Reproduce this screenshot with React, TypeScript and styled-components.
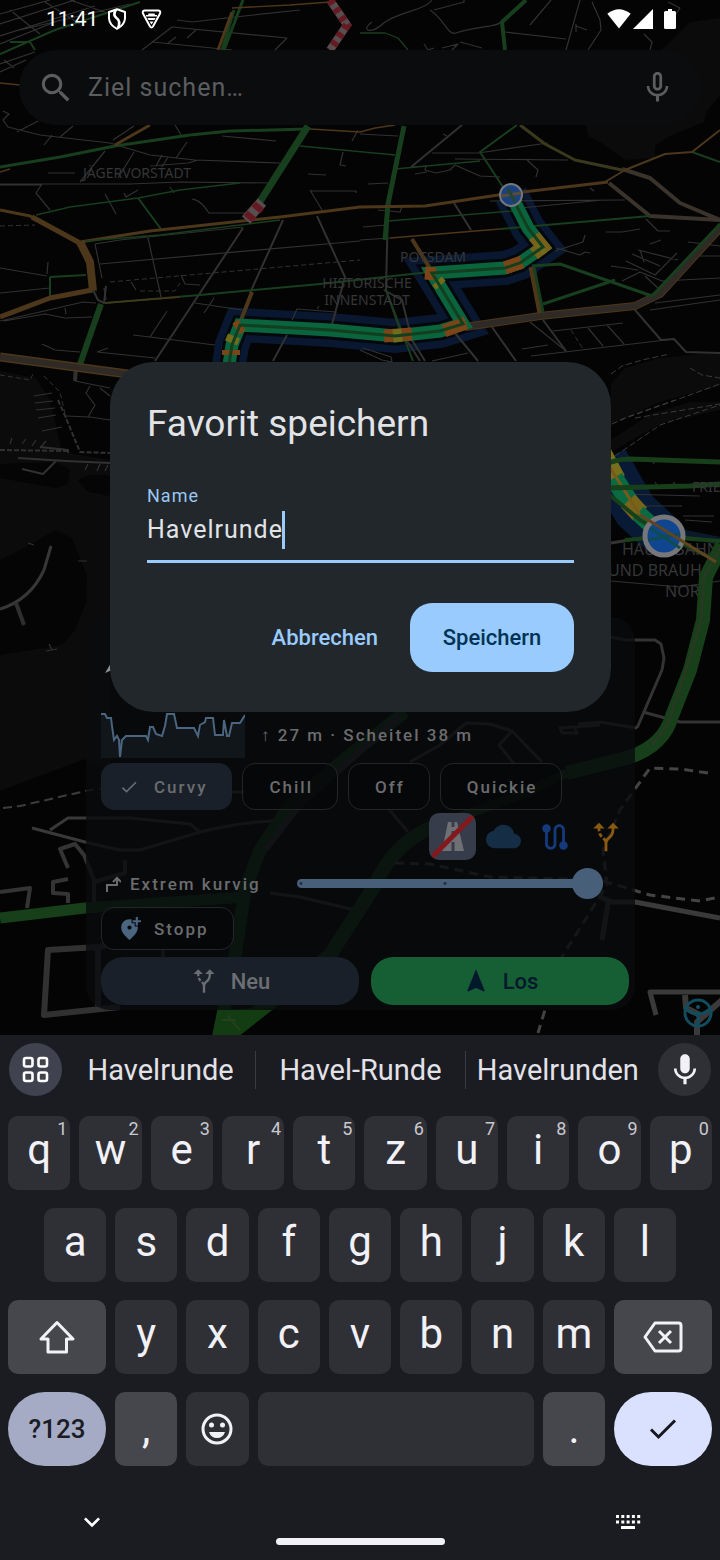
import React from "react";
import styled, { createGlobalStyle, css } from "styled-components";
import {
  MdAddLocationAlt,
  MdAltRoute,
  MdCheck,
  MdCloud,
  MdExpandMore,
  MdMic,
  MdMicNone,
  MdNavigation,
  MdRoute,
  MdSearch,
} from "react-icons/md";

const GlobalStyle = createGlobalStyle`
  *, *::before, *::after { box-sizing: border-box; }
  body {
    margin: 0;
    background: #1b1c21;
    font-family: Roboto, "Liberation Sans", sans-serif;
  }
  button, input { font: inherit; color: inherit; }
  button { border: 0; padding: 0; background: none; cursor: pointer; }
  svg { display: block; flex: none; }
`;

/* ---------- Page frame ---------- */

const Screen = styled.div`
  display: flex;
  flex-direction: column;
  min-height: 100vh;
`;

const Stage = styled.main`
  position: relative;
  flex: 1;
  display: flex;
  flex-direction: column;
  overflow: hidden;
  background: #040404;
`;

const MapCanvas = styled.svg`
  position: absolute;
  inset: 0;
  width: 100%;
  height: 100%;
`;

const MapLabel = styled.text<{ $size?: number }>`
  font-family: "Noto Sans", sans-serif;
  font-size: ${(p) => p.$size ?? 14}px;
  fill: #353637;
`;

const StatusBar = styled.header`
  position: relative;
  display: flex;
  justify-content: space-between;
  align-items: center;
  height: 38px;
  padding: 0 44px 0 46px;
  color: #fff;
  font-size: 21px;
`;

const StatusGroup = styled.div<{ $gap: number }>`
  display: flex;
  align-items: center;
  gap: ${(p) => p.$gap}px;
`;

const SearchBar = styled.div`
  position: relative;
  display: flex;
  align-items: center;
  height: 75px;
  margin: 12px 19px 0;
  padding: 0 25px 0 18px;
  border-radius: 38px;
  background: #0a0c0e;
  color: #5c5d5f;
`;

const SearchInput = styled.input`
  flex: 1;
  min-width: 0;
  margin-left: 13px;
  padding: 0;
  border: 0;
  outline: 0;
  background: none;
  font-size: 25px;
  letter-spacing: 1px;
  &::placeholder { color: #5c5d5f; opacity: 1; }
`;

/* ---------- Route panel ---------- */

const Panel = styled.section`
  position: relative;
  display: flex;
  flex-direction: column;
  margin: auto 85px 25px 86px;
  padding: 0 6px 5px 15px;
  border-radius: 24px;
  background: rgba(9, 11, 14, 0.8);
  color: #6b6c6e;
  font-size: 17px;
  font-weight: 500;
  letter-spacing: 2px;
`;

const PanelHeader = styled.div`
  display: flex;
  align-items: center;
  height: 95px;
  padding: 0 4px;
  color: #8c8d8f;
`;

const ElevationRow = styled.div`
  display: flex;
  align-items: center;
  gap: 16px;
  height: 46px;
  margin-bottom: 5px;
`;

const ChipRow = styled.div`
  display: flex;
  gap: 10px;
  margin-bottom: 3px;
`;

const Chip = styled.button<{ $selected?: boolean; $icon?: boolean; $height?: number }>`
  display: flex;
  align-items: center;
  align-self: flex-start;
  gap: 14px;
  height: ${(p) => p.$height ?? 47}px;
  padding: ${(p) => (p.$icon ? "0 24px 0 16px" : "0 24px 0 26px")};
  border: 1px solid ${(p) => (p.$selected ? "#1a2029" : "#232527")};
  border-radius: 13px;
  background: ${(p) => (p.$selected ? "#1a2029" : "rgba(6, 7, 9, 0.7)")};
  letter-spacing: 2px;
`;

const ChipIcon = styled.span`
  display: flex;
  align-items: center;
  justify-content: center;
  width: 22px;
`;

const ToolRow = styled.div`
  display: flex;
  justify-content: flex-end;
  gap: 4px;
`;

const ToolButton = styled.button<{ $color?: string; $active?: boolean }>`
  display: grid;
  place-items: center;
  width: 47px;
  height: 47px;
  border-radius: 10px;
  color: ${(p) => p.$color};
  background: ${(p) => (p.$active ? "#363c4a" : "transparent")};
`;

const CurvyRow = styled.div`
  display: flex;
  align-items: center;
  justify-content: space-between;
  height: 47px;
  padding: 0 26px 0 4px;
`;

const CurvyLabel = styled.label`
  display: flex;
  align-items: center;
  gap: 9px;
`;

const thumb = css`
  width: 31px;
  height: 31px;
  border: 0;
  border-radius: 50%;
  background: #475f79;
`;

const Slider = styled.input`
  appearance: none;
  width: 306px;
  height: 31px;
  margin: 0;
  background: none;
  &::-webkit-slider-runnable-track {
    height: 9px;
    border-radius: 5px;
    background:
      radial-gradient(circle at 4px 50%, #1f3040 1px, transparent 2px),
      radial-gradient(circle at 148px 50%, #1f3040 1px, transparent 2px),
      #475f79;
  }
  &::-webkit-slider-thumb {
    appearance: none;
    margin-top: -11px;
    ${thumb}
  }
  &::-moz-range-thumb { ${thumb} }
`;

const ActionRow = styled.div`
  display: grid;
  grid-template-columns: 1fr 1fr;
  gap: 12px;
  margin-top: 7px;
`;

const ActionButton = styled.button<{ $primary?: boolean }>`
  display: flex;
  align-items: center;
  justify-content: center;
  gap: 13px;
  height: 48px;
  border-radius: 22px;
  background: ${(p) => (p.$primary ? "#165e34" : "#1a2029")};
  color: ${(p) => (p.$primary ? "#02192c" : "#6b6e73")};
  font-size: 22px;
  letter-spacing: 0;
`;

/* ---------- Dialog ---------- */

const DialogLayer = styled.div`
  position: absolute;
  inset: 0;
  display: flex;
  align-items: center;
  padding: 38px 109px 0 110px;
`;

const Dialog = styled.form`
  flex: 1;
  padding: 37px 37px 40px;
  border-radius: 44px;
  background: #22272b;
  color: #e1e3e7;
`;

const DialogTitle = styled.h1`
  margin: 0 0 35px;
  font-size: 37px;
  line-height: 50px;
  font-weight: 400;
`;

const FieldLabel = styled.label`
  display: block;
  font-size: 18px;
  line-height: 24px;
  letter-spacing: 1px;
  color: #99c7f2;
`;

const Field = styled.div`
  display: flex;
  align-items: center;
  margin-top: 3px;
  padding-bottom: 11px;
  border-bottom: 3px solid #99cbff;
`;

const FieldInput = styled.input`
  field-sizing: content;
  min-width: 20px;
  max-width: 100%;
  height: 38px;
  padding: 0;
  border: 0;
  outline: 0;
  background: none;
  caret-color: transparent;
  font-size: 25px;
  letter-spacing: 1px;
`;

const Caret = styled.span`
  width: 3px;
  height: 38px;
  margin-left: -1px;
  background: #99cbff;
`;

const DialogActions = styled.div`
  display: flex;
  justify-content: flex-end;
  gap: 12px;
  margin-top: 40px;
`;

const DialogButton = styled.button<{ $filled?: boolean }>`
  min-width: ${(p) => (p.$filled ? 164 : 0)}px;
  height: 69px;
  padding: 0 20px;
  border-radius: 22px;
  background: ${(p) => (p.$filled ? "#99cbff" : "transparent")};
  color: ${(p) => (p.$filled ? "#003355" : "#99cbff")};
  font-size: 22px;
  font-weight: 500;
`;

/* ---------- Keyboard ---------- */

const Keyboard = styled.section`
  background: #1b1c21;
  color: #f2f1f8;
`;

const SuggestionBar = styled.div`
  display: flex;
  align-items: center;
  gap: 4px;
  height: 69px;
  padding: 0 9px;
`;

const RoundButton = styled.button<{ $bg: string }>`
  display: grid;
  place-items: center;
  width: 53px;
  height: 53px;
  border-radius: 50%;
  background: ${(p) => p.$bg};
`;

const Suggestions = styled.div`
  flex: 1;
  display: grid;
  grid-template-columns: 189fr 209fr 185fr;
  padding-right: 4px;
`;

const Suggestion = styled.button`
  height: 38px;
  font-size: 29px;
  line-height: 38px;
  white-space: nowrap;
  color: #e3e2e9;
  & + & { border-left: 1px solid #3a3b41; }
`;

const KeyRows = styled.div`
  display: flex;
  flex-direction: column;
  gap: 18px;
  padding: 12px 8px 0;
`;

const KeyRow = styled.div<{ $inset?: boolean }>`
  display: flex;
  gap: 9px;
  padding: 0 ${(p) => (p.$inset ? 36 : 0)}px;
`;

const tones = {
  plain: "#2f3035",
  special: "#46474c",
  symbols: "#a5abc4",
  enter: "#d9e1ff",
};

/* Keys grow in proportion to the number of letter columns they cover. */
const Key = styled.button<{
  $grow?: number;
  $tone?: keyof typeof tones;
  $pill?: boolean;
  $mark?: boolean;
}>`
  position: relative;
  display: flex;
  align-items: center;
  justify-content: center;
  flex: ${(p) => p.$grow ?? 624} 1 0;
  min-width: 0;
  height: 74px;
  border-radius: ${(p) => (p.$pill ? 37 : 10)}px;
  background: ${(p) => tones[p.$tone ?? "plain"]};
  font-size: 42px;
  line-height: 50px;
  padding-bottom: ${(p) => (p.$mark ? 0 : 6)}px;
`;

const SymbolsKey = styled(Key)`
  padding-bottom: 0;
  color: #1b1c25;
  font-size: 26px;
  font-weight: 500;
`;

const KeyHint = styled.span`
  position: absolute;
  top: 3px;
  right: 3px;
  font-size: 18px;
  line-height: 20px;
  color: #c9c8cf;
`;

const NavRow = styled.div`
  display: flex;
  justify-content: space-between;
  align-items: center;
  height: 24px;
  margin-top: 44px;
  padding: 0 79px 0 76px;
`;

const HomePill = styled.div`
  width: 169px;
  height: 7px;
  margin: 4px auto 15px;
  border-radius: 4px;
  background: #f1f0f4;
`;

/* ---------- Map data ---------- */

type Road = { d: string; c: string; w: number; dash?: string };

const GREY = "#313132";
const GREEN = "#173e1d";
const ORANGE = "#4d371a";
const BROWN = "#2f2a25";

const land = [
  "M690 22L720 18V95L706 112L704 122L670 136L655 146L655 158L625 160L605 145L588 136L586 125Z",
  "M611 384L625 368L660 358L720 352V386L660 402L611 425Z",
  "M0 371L36 378L50 400L62 452L110 460V770L85 759L0 791Z",
  "M611 440L650 414L690 402H720V410L660 424L611 452Z",
];

const water = [
  "M0 560L30 545L55 530L72 538L79 555L87 575L86 603L75 630L62 645L0 655Z",
  "M0 464L55 462L70 470L68 484L55 488L0 478Z",
  "M78 480Q90 472 110 476V496L88 492Z",
];

const thinRoads = [
  "M0 14L50 0", "M0 24L75 0", "M0 36L95 6", "M0 44L60 20", "M20 30L130 4", "M45 2L80 24", "M10 10L40 34", "M70 0L110 14",
  "M177 20L192 22L235 17L300 10", "M142 50L172 27L287 38L275 50", "M152 42L232 50", "M167 44L176 37", "M187 38L196 30",
  "M0 64L35 52", "M0 72L26 60", "M4 60L14 68",
  "M432 0C425 10 400 12 385 22C370 36 360 30 372 22", "M430 10C445 20 448 36 456 33C475 26 500 27 500 22", "M434 10L464 2L464 0",
  "M551 0L530 25", "M580 0L566 50", "M592 2L600 20L601 30L588 50", "M576 24L576 32M576 26L587 30", "M505 32L566 39",
  "M644 34L652 42L650 50", "M668 2L680 8L676 14", "M424 44L428 50L434 48M442 48L458 44L452 50M460 42L482 48",
  "M3 111L9 114L3 120L8 127L40 135L66 138L110 143L150 155L195 160L280 163", "M17 132L38 121", "M60 137L73 126", "M52 135L44 145", "M113 140L134 126",
  "M105 151L80 182", "M134 152L118 178", "M162 155L156 166M168 157L162 167", "M187 142L176 158", "M150 166L188 163L198 160", "M175 125L181 135",
  "M48 173H75", "M0 184L130 184L180 182", "M180 182L276 183", "M42 184L36 193L50 210", "M105 194L116 214", "M138 190L126 197L124 193",
  "M192 199C200 200 204 206 209 213L246 213", "M0 185L42 185", "M170 187L174 193", "M343 152L340 165L346 166", "M308 174L326 175", "M222 136L276 141",
  "M310 191L356 191L356 193M310 190L322 210", "M358 130L352 141",
  "M95 244L120 240L243 227", "M95 244L102 278", "M148 238L161 297", "M100 264L360 241", "M0 268L47 276", "M0 293L50 288", "M48 262L47 274",
  "M181 275L185 284L200 285", "M131 282L136 290", "M0 321L40 312L83 302L96 303", "M4 321L45 314L65 318L92 317", "M65 308L66 314",
  "M42 344L55 350L80 352", "M97 352L108 348M97 352L155 358", "M167 311L150 337L133 335", "M150 337L215 345", "M195 303L242 310", "M204 313L214 298",
  "M292 320L297 309L336 312L332 324", "M317 309L319 306", "M104 288L106 300",
  "M75 381L110 388", "M90 386L86 393L95 405L88 417M100 388L110 396", "M34 396L52 393M35 403L53 401M36 410L55 408M38 418L56 415M42 431L62 427", "M12 438L10 444M26 439L22 444M36 440L32 446M46 441L40 448", "M66 416L90 417L110 420", "M88 464L85 470M100 464L97 471M108 465L105 471",
  "M28 543L34 545M78 561L87 561M49 644L52 650M46 651L57 649",
  "M412 167L426 166L425 170L436 173L450 170L455 165L480 176L500 177", "M455 159L568 160", "M432 153L478 153L548 143", "M415 174L427 172", "M368 184L388 183", "M490 201L625 200", "M527 160L538 170L536 177", "M360 134L398 136", "M443 134L447 136",
  "M378 210L400 212L402 207", "M455 204L471 230", "M363 227L386 225", "M360 240L390 238", "M520 208L603 200", "M590 188L594 191",
  "M555 251L583 242L585 235", "M556 248L580 255L585 252L590 253", "M606 232L622 232L640 229", "M646 219L658 231L670 231", "M638 250L678 260M640 250L644 262M632 254L660 266M626 261L655 275M611 266L638 270M655 275L677 253M650 244L661 240M622 281L640 272L662 281L720 278M645 276L660 290", "M688 242L720 246M698 256H720", "M650 310L720 300M655 303L720 295",
  "M530 322L566 351", "M553 331L623 323", "M531 356L674 339", "M588 328L603 346", "M607 325L624 344", "M522 349L548 345", "M360 350L382 360L392 362L391 357L363 348", "M432 361L468 353",
  "M640 506L682 506M620 494L700 496M683 516L714 516M685 520L712 522", "M611 581L680 587L720 581", "M654 464L653 461M657 485L655 482M673 484L675 482",
].join("");

const roads: Road[] = [
  { d: thinRoads, c: GREY, w: 1.2 },
  { d: "M243 228L155 361M283 220L250 293M317 216L345 277L332 324M287 335L273 361M454 203L471 230M492 327L516 361M455 333L478 361M635 310L661 340L674 339L686 352L720 353M543 320L566 351M388 204L386 290L400 330L420 361M462 125L411 167M384 290L402 300L412 340L425 361", c: GREY, w: 2 },
  { d: "M110 282L360 260M571 330L583 349M0 226L35 225M140 291L175 291L180 283M0 375L30 380L34 372M44 376L60 392L66 418", c: GREY, w: 1, dash: "5 3" },
  { d: "M611 374L622 366L642 360L670 354M620 420L665 404L720 384M635 418L720 404M612 424L630 416L675 400M615 456L660 425L720 405M690 368L702 375L720 378", c: "#3a3a3a", w: 1, dash: "6 3" },
  { d: "M0 450L68 451M58 400L66 418L80 452L110 453", c: GREY, w: 2, dash: "5 2" },
  { d: "M18 458L66 461L110 463M22 469L43 474L56 461M40 447L68 450V453", c: GREY, w: 2 },
  { d: "M51 546L44 570Q30 600 0 609", c: "#373738", w: 3 },
  { d: "M16 603L24 625", c: "#2f2f30", w: 4 },
  { d: "M611 543L660 535L720 541M611 637L625 640L655 640L661 644L664 658L662 670L637 728M643 712L680 722L720 722", c: "#333334", w: 3 },
  { d: "M0 54L55 30L140 2M35 50L30 42L10 42", c: GREEN, w: 2 },
  { d: "M243 0L224 50M234 10L222 50", c: GREEN, w: 3 },
  { d: "M232 12L218 50", c: ORANGE, w: 3 },
  { d: "M232 8L290 5L330 2M0 83L20 85M310 129L360 132L375 128L395 125M0 172L10 169", c: ORANGE, w: 1.4 },
  { d: "M0 167L60 157L115 146L190 135L230 131L308 129", c: GREEN, w: 3 },
  { d: "M150 125L115 145", c: ORANGE, w: 3 },
  { d: "M308 126L259 203", c: GREEN, w: 7 },
  { d: "M300 146L395 155M360 33L385 33L398 38L408 50M36 215L70 207L138 198L180 190L240 183M395 169L480 161M388 221L500 212L524 210", c: GREEN, w: 1.3 },
  { d: "M404 126L388 204L385 240", c: GREEN, w: 5 },
  { d: "M526 0L502 22L505 50", c: GREEN, w: 4 },
  { d: "M517 125L480 152L505 190M692 152L720 162M138 198L161 229M50 277V296M50 277L86 275", c: GREEN, w: 2 },
  { d: "M520 125L545 144L575 160L622 170", c: "#3a391d", w: 3 },
  { d: "M622 169L650 178L680 203L720 220M609 183L650 216L720 220", c: "#3a332c", w: 4 },
  { d: "M605 182L625 170L665 154L692 152L720 130", c: ORANGE, w: 2 },
  { d: "M0 210L30 216L80 242L150 231L280 217L360 207L425 206L505 194L608 182", c: ORANGE, w: 3 },
  { d: "M32 217L78 242Q94 262 92 290L50 298L0 317", c: ORANGE, w: 5 },
  { d: "M80 242L90 262L93 291", c: ORANGE, w: 8 },
  { d: "M85 241L160 235L280 220", c: GREEN, w: 1.4 },
  { d: "M93 290L98 300L104 303L106 286", c: GREY, w: 2 },
  { d: "M105 303L200 295L320 284L430 272", c: GREEN, w: 2 },
  { d: "M105 303L180 297M390 238L500 229", c: ORANGE, w: 1.4 },
  { d: "M500 229L650 216", c: GREEN, w: 2 },
  { d: "M412 239L431 270M252 292L241 320", c: ORANGE, w: 4 },
  { d: "M101 304L78 370", c: GREEN, w: 6 },
  { d: "M76 368L75 381", c: GREY, w: 4 },
  { d: "M0 357L135 375", c: ORANGE, w: 9 },
  { d: "M0 357L135 375", c: BROWN, w: 6 },
  { d: "M465 327L540 316L635 306L660 294L722 226", c: ORANGE, w: 8 },
  { d: "M465 327L540 316L635 306L660 294L722 226", c: BROWN, w: 6 },
  { d: "M652 296L720 224M532 266L560 264L652 296M543 304L615 280", c: GREEN, w: 3 },
  { d: "M531 267L540 313", c: ORANGE, w: 5 },
  { d: "M534 267L543 312", c: GREEN, w: 3 },
  { d: "M386 290L413 361", c: GREEN, w: 2 },
];

const lowerRoads: Road[] = [
  { d: "M3 808L20 806L90 790L105 788", c: "#3c3c3c", w: 2, dash: "9 5" },
  { d: "M32 828L85 842L120 850L140 850L200 832Q240 822 275 821M50 830L68 818H130L190 824L200 832M101 792H245M270 893L300 897L355 910M410 762L440 745L466 723L490 724L512 731L542 762M512 731L499 745L515 765M388 808L408 832M600 725L560 728L562 733H577L574 726M637 728L600 722L578 724M345 765L300 805", c: "#39393a", w: 3 },
  { d: "M68 868L60 849L75 844L84 855L94 880V905M94 882L125 873V860M68 879L53 882V893L68 894V903M0 892L30 888L27 908M163 950V960", c: "#343435", w: 4 },
  { d: "M106 946L98 947L48 950L44 1015L120 1007M98 947V1006", c: "#313132", w: 6 },
  { d: "M0 918L85 908L245 897", c: "#173f19", w: 11 },
  { d: "M405 712L350 755L290 805L260 850L245 890L236 950L218 1040", c: "#173f19", w: 13 },
  { d: "M400 716L345 765L300 805L265 850", c: "#313132", w: 6 },
  { d: "M722 545L706 577L703 620L690 670L672 716Q664 745 630 757L567 773M440 824Q395 840 375 885L330 955L250 1018L222 1040", c: "#173f19", w: 14 },
  { d: "M440 824L520 795L567 773", c: "#173f19", w: 9 },
  { d: "M722 545L704 577L701 620L686 670L668 724L652 745", c: "#263a22", w: 3 },
  { d: "M708 773L680 769L650 768L620 810L603 850L607 885L560 960L538 1033M395 863L430 864L490 877L600 880L650 895L700 901L720 897", c: "#444443", w: 3, dash: "9 6" },
  { d: "M598 896L612 902L635 902L720 918M608 903L602 940M722 992H650L656 1015", c: "#3a3a3a", w: 5 },
  { d: "M697 1037V1022L722 1000M685 995L686 1008L700 1015", c: "#3a3a3a", w: 6 },
];

const routePath = "M511 195L528 228L543 247L520 263L505 268L432 273L463 324L440 331L395 336L330 330L240 325L232 345L229 365";
const finishPath = "M606 460L622 488L635 510L664 537";

const RoadLines = ({ items }: { items: Road[] }) => (
  <g fill="none" strokeLinejoin="round">
    {items.map((r, i) => (
      <path key={i} d={r.d} stroke={r.c} strokeWidth={r.w} strokeDasharray={r.dash} />
    ))}
  </g>
);

const CityMap = () => (
  <MapCanvas viewBox="0 0 720 1035" preserveAspectRatio="xMidYMin slice" aria-hidden="true">
    <g fill="#0b0b0b">{land.map((d) => <path key={d} d={d} />)}</g>
    <g fill="#050505">{water.map((d) => <path key={d} d={d} />)}</g>
    <g fill="none">
      <path d={routePath} stroke="#091730" strokeWidth="34" />
      <path d={routePath} stroke="#04080c" strokeWidth="19" />
      <path d={finishPath} stroke="#081a36" strokeWidth="44" />
      <path d="M664 530L690 535L720 541" stroke="#0a1a2a" strokeWidth="8" />
    </g>
    <RoadLines items={roads} />
    <MapLabel x="83" y="178">JÄGERVORSTADT</MapLabel>
    <MapLabel x="400" y="262">POTSDAM</MapLabel>
    <MapLabel x="367" y="288" textAnchor="middle">HISTORISCHE</MapLabel>
    <MapLabel x="367" y="305" textAnchor="middle">INNENSTADT</MapLabel>
    <g fill="none">
      <path d={routePath} stroke="#0a643e" strokeWidth="13" />
      <path d="M534 236L543 247L534 254" stroke="#77611a" strokeWidth="13" />
      <path d="M522 262L505 268M425 273L436 274M466 323L444 331M412 334L384 336M242 325L236 329" stroke="#7c4517" strokeWidth="13" />
      <path d="M437 281L441 285M402 335L393 336M234 336L231 343M543 247L539 250" stroke="#716b1c" strokeWidth="13" />
      <path d="M231 350V355" stroke="#7c4517" strokeWidth="18" />
      <path d={routePath} stroke="#123f1e" strokeWidth="3" />
      <path d="M600 450L616 480" stroke="#776f1a" strokeWidth="20" />
      <path d="M614 478L630 503" stroke="#0a6a42" strokeWidth="19" />
      <path d="M628 501L640 514" stroke="#77651a" strokeWidth="19" />
      <path d="M638 513L664 537" stroke="#0a6a42" strokeWidth="17" />
      <path d="M602 455L640 515" stroke="#7a5a1a" strokeWidth="3" />
      <path d="M330 0L347 25L330 50" stroke="#574e4f" strokeWidth="8" />
      <path d="M330 0L347 25L330 50" stroke="#651a23" strokeWidth="8" strokeDasharray="5 5" />
      <path d="M262 202L246 220" stroke="#574e4f" strokeWidth="11" />
      <path d="M260 205L256 210M252 214L248 219" stroke="#651a23" strokeWidth="11" />
      <path d="M606 465Q614 459 630 459L720 462M606 488L690 486L720 484" stroke="#173f19" strokeWidth="5" />
      <path d="M606 492L640 520L690 548L720 562M625 540L664 537L720 541" stroke="#173f19" strokeWidth="4" />
    </g>
    <MapLabel x="692" y="492">FRIE</MapLabel>
    <MapLabel x="622" y="555" $size={16}>HAUPTBAHN</MapLabel>
    <MapLabel x="608" y="576" $size={16}>UND BRAUHA</MapLabel>
    <MapLabel x="665" y="597" $size={16}>NORD</MapLabel>
    <circle cx="511" cy="195" r="11" fill="#1b427c" stroke="#74777d" strokeWidth="2" />
    <path d="M501 196L521 193" stroke="#5b4a38" strokeWidth="3" />
    <path d="M508 189L515 202" stroke="#27452c" strokeWidth="3" />
    <circle cx="664" cy="536" r="19" fill="#10468f" stroke="#77777b" strokeWidth="5" />
    <path d="M648 540L680 534M650 528L680 548" stroke="#0f4b52" strokeWidth="3" />
    <RoadLines items={lowerRoads} />
    <path d="M640 515L716 562" stroke="#5e451e" strokeWidth="3" />
    <path d="M219 1010L276 1007L238 1037H212Z" fill="#143c12" />
    <path d="M222 1020H236M228 1016L240 1030" stroke="#23401f" strokeWidth="2" />
    <g fill="none" stroke="#114c5f" strokeWidth="3">
      <circle cx="698" cy="1013" r="13" />
      <path d="M687 1010Q698 1018 709 1010M698 1014V1024" />
    </g>
    <circle cx="698" cy="1007" r="2" fill="#125468" />
  </MapCanvas>
);

/* ---------- Drawn icons ---------- */

const ShieldIcon = () => (
  <svg width="20" height="22" viewBox="0 0 20 22" fill="none" stroke="#fff" strokeWidth="2" strokeLinejoin="round">
    <path d="M10 1.2L18 4V10.5Q17.500 17 10 20.800Q2.500 17 2 10.500V4Z" />
    <path d="M9 1.500Q5.500 7 9.500 10Q14 13 11 20" strokeWidth="2.600" />
  </svg>
);

const BadgeIcon = () => (
  <svg width="21" height="20" viewBox="0 0 21 20">
    <path d="M3.500 1.500H17.500Q20 2 19 4.500L12 17.500Q10.500 19.500 9 17.500L2 4.500Q1 2 3.500 1.500Z" fill="none" stroke="#fff" strokeWidth="2" />
    <path d="M7.500 4.500H13.500L14 6H16V7.500H5V6H7ZM6.500 9H14.500L13.500 11H7.500ZM8.500 12.500H12.500L10.500 15.500Z" fill="#fff" />
  </svg>
);

const WifiIcon = () => (
  <svg width="24" height="20" viewBox="0 0 24 20" fill="#fff">
    <path d="M12 19.500L0.300 4.800Q12 -4.200 23.700 4.800Z" />
  </svg>
);

const SignalIcon = () => (
  <svg width="20" height="20" viewBox="0 0 20 20" fill="#fff">
    <path d="M20 0V20H0Z" />
  </svg>
);

const BatteryIcon = () => (
  <svg width="12" height="20" viewBox="0 0 12 20" fill="#fff">
    <path d="M4 0H8V2H10.500Q12 2 12 3.500V18.500Q12 20 10.500 20H1.500Q0 20 0 18.500V3.500Q0 2 1.500 2H4Z" />
  </svg>
);

const HeadingIcon = () => (
  <svg width="24" height="24" viewBox="0 0 24 24" fill="currentColor">
    <path d="M12 0L24 20L12 15L0 20Z" />
  </svg>
);

const ElevationChart = () => (
  <svg width="144" height="46" viewBox="0 0 144 46" aria-label="Höhenprofil">
    <path d="M0 2H3L6 6H9L13 29L18 27H20L24 24H45L49 15L60 24L66 2H73L76 16H93L97 24L104 8H112L114 23H127L131 11H139L144 4V46H0Z" fill="#11161b" />
    <path
      d="M0 2H4L6 6H10L11 14L13 28L16 24L18 28L19 45L21 28L25 24H45L47 28L49 15H52L55 22L61 24L64 14L66 2H73L76 16H93L97 24L99 13L104 10L105 6H112L114 23H122L123 8L126 24H128L131 11H139L144 3"
      fill="none"
      stroke="#4a657f"
      strokeWidth="2"
    />
  </svg>
);

const MotorwayIcon = () => (
  <svg width="47" height="47" viewBox="0 0 47 47">
    <path d="M19 9H28L35 38H13Z" fill="#6e7073" />
    <path d="M24 9V14M24 18V24M24 29V38" stroke="#363c4a" strokeWidth="3" />
    <path d="M5 42L42 5" stroke="#84191d" strokeWidth="5" strokeLinecap="round" />
  </svg>
);

const BendsIcon = () => (
  <svg width="16" height="18" viewBox="0 0 16 18" fill="none" stroke="currentColor" strokeWidth="2">
    <path d="M2 17V10H12V3M8 7L12 3L16 7" />
  </svg>
);

const GridIcon = () => (
  <svg width="27" height="27" viewBox="0 0 27 27" fill="none" stroke="#fff" strokeWidth="2.600">
    <rect x="2" y="2" width="8.500" height="8.500" rx="2" />
    <rect x="16.500" y="2" width="8.500" height="8.500" rx="2" />
    <rect x="2" y="16.500" width="8.500" height="8.500" rx="2" />
    <rect x="16.500" y="16.500" width="8.500" height="8.500" rx="2" />
  </svg>
);

const ShiftIcon = () => (
  <svg width="36" height="34" viewBox="0 0 36 34" fill="none" stroke="currentColor" strokeWidth="3" strokeLinejoin="round">
    <path d="M18 2.500L34 19H27.500V32H9V19H2Z" />
  </svg>
);

const BackspaceIcon = () => (
  <svg width="40" height="32" viewBox="0 0 40 32" fill="none" stroke="currentColor" strokeWidth="3" strokeLinejoin="round">
    <path d="M12 2H35.500Q38 2 38 4.500V27.500Q38 30 35.500 30H12L2 16Z" />
    <path d="M16 10L28 22M28 10L16 22" />
  </svg>
);

const EmojiIcon = () => (
  <svg width="32" height="32" viewBox="0 0 32 32">
    <circle cx="16" cy="16" r="14" fill="none" stroke="currentColor" strokeWidth="3" />
    <circle cx="10.500" cy="12" r="2.500" fill="currentColor" />
    <circle cx="21.500" cy="12" r="2.500" fill="currentColor" />
    <path d="M8 19H24Q22 25 16 25Q10 25 8 19Z" fill="currentColor" />
  </svg>
);

const EnterIcon = () => (
  <svg width="28" height="22" viewBox="0 0 28 22" fill="none" stroke="#16171c" strokeWidth="3">
    <path d="M2 11.500L9.500 19L26 2.500" />
  </svg>
);

const LayoutIcon = () => (
  <svg width="26" height="14" viewBox="0 0 26 14" fill="#fff">
    {[0, 1, 2, 3, 4].map((i) => (
      <React.Fragment key={i}>
        <rect x={1 + i * 5.3} y="0" width="3" height="3" />
        <rect x={1 + i * 5.3} y="5.500" width="3" height="3" />
      </React.Fragment>
    ))}
    <rect x="6" y="11" width="14" height="3" />
  </svg>
);

/* ---------- App ---------- */

export default function App() {
  return (
    <>
      <GlobalStyle />
      <Screen>
        <Stage>
          <CityMap />
          <StatusBar>
            <StatusGroup $gap={14}>
              <StatusGroup $gap={9}>
                <span>11:41</span>
                <ShieldIcon />
              </StatusGroup>
              <BadgeIcon />
            </StatusGroup>
            <StatusGroup $gap={11}>
              <StatusGroup $gap={2}>
                <WifiIcon />
                <SignalIcon />
              </StatusGroup>
              <BatteryIcon />
            </StatusGroup>
          </StatusBar>
          <SearchBar>
            <MdSearch size={38} />
            <SearchInput aria-label="Ziel suchen" placeholder="Ziel suchen…" />
            <MdMicNone size={37} />
          </SearchBar>

          <Panel>
            <PanelHeader>
              <HeadingIcon />
            </PanelHeader>
            <ElevationRow>
              <ElevationChart />
              <span>↑ 27 m · Scheitel 38 m</span>
            </ElevationRow>
            <ChipRow>
              <Chip type="button" $selected $icon>
                <ChipIcon>
                  <MdCheck size={20} />
                </ChipIcon>
                Curvy
              </Chip>
              <Chip type="button">Chill</Chip>
              <Chip type="button">Off</Chip>
              <Chip type="button">Quickie</Chip>
            </ChipRow>
            <ToolRow>
              <ToolButton type="button" $active aria-label="Autobahn meiden">
                <MotorwayIcon />
              </ToolButton>
              <ToolButton type="button" $color="#152d45" aria-label="Wetter">
                <MdCloud size={35} />
              </ToolButton>
              <ToolButton type="button" $color="#153a7c" aria-label="Strecke">
                <MdRoute size={34} />
              </ToolButton>
              <ToolButton type="button" $color="#8a5a10" aria-label="Alternativen">
                <MdAltRoute size={34} />
              </ToolButton>
            </ToolRow>
            <CurvyRow>
              <CurvyLabel htmlFor="curviness">
                <BendsIcon />
                Extrem kurvig
              </CurvyLabel>
              <Slider id="curviness" type="range" min={0} max={2} defaultValue={2} />
            </CurvyRow>
            <Chip type="button" $icon $height={43}>
              <ChipIcon>
                <MdAddLocationAlt size={25} color="#4a657f" />
              </ChipIcon>
              Stopp
            </Chip>
            <ActionRow>
              <ActionButton type="button">
                <MdAltRoute size={28} />
                Neu
              </ActionButton>
              <ActionButton type="button" $primary>
                <MdNavigation size={28} />
                Los
              </ActionButton>
            </ActionRow>
          </Panel>

          <DialogLayer>
            <Dialog role="dialog" aria-labelledby="dialog-title" onSubmit={(e) => e.preventDefault()}>
              <DialogTitle id="dialog-title">Favorit speichern</DialogTitle>
              <FieldLabel htmlFor="favorite-name">Name</FieldLabel>
              <Field>
                <FieldInput id="favorite-name" defaultValue="Havelrunde" size={10} />
                <Caret />
              </Field>
              <DialogActions>
                <DialogButton type="button">Abbrechen</DialogButton>
                <DialogButton type="submit" $filled>
                  Speichern
                </DialogButton>
              </DialogActions>
            </Dialog>
          </DialogLayer>
        </Stage>

        <Keyboard>
          <SuggestionBar>
            <RoundButton type="button" $bg="#40424f" aria-label="Menü">
              <GridIcon />
            </RoundButton>
            <Suggestions>
              <Suggestion type="button">Havelrunde</Suggestion>
              <Suggestion type="button">Havel-Runde</Suggestion>
              <Suggestion type="button">Havelrunden</Suggestion>
            </Suggestions>
            <RoundButton type="button" $bg="#2f3035" aria-label="Spracheingabe">
              <MdMic size={38} />
            </RoundButton>
          </SuggestionBar>
          <KeyRows>
            <KeyRow>
              {[..."qwertzuiop"].map((k, i) => (
                <Key key={k} type="button">
                  {k}
                  <KeyHint>{(i + 1) % 10}</KeyHint>
                </Key>
              ))}
            </KeyRow>
            <KeyRow $inset>
              {[..."asdfghjkl"].map((k) => (
                <Key key={k} type="button">{k}</Key>
              ))}
            </KeyRow>
            <KeyRow>
              <Key type="button" $grow={981} $tone="special" $mark aria-label="Umschalten">
                <ShiftIcon />
              </Key>
              {[..."yxcvbnm"].map((k) => (
                <Key key={k} type="button">{k}</Key>
              ))}
              <Key type="button" $grow={981} $tone="special" $mark aria-label="Löschen">
                <BackspaceIcon />
              </Key>
            </KeyRow>
            <KeyRow>
              <SymbolsKey type="button" $grow={981} $tone="symbols" $pill>?123</SymbolsKey>
              <Key type="button" $tone="special" $mark>,</Key>
              <Key type="button" $mark aria-label="Emoji">
                <EmojiIcon />
              </Key>
              <Key type="button" $grow={2766} aria-label="Leertaste" />
              <Key type="button" $tone="special" $mark>.</Key>
              <Key type="button" $grow={981} $tone="enter" $pill $mark aria-label="Fertig">
                <EnterIcon />
              </Key>
            </KeyRow>
          </KeyRows>
          <NavRow>
            <MdExpandMore size={32} color="#fff" />
            <LayoutIcon />
          </NavRow>
          <HomePill />
        </Keyboard>
      </Screen>
    </>
  );
}
